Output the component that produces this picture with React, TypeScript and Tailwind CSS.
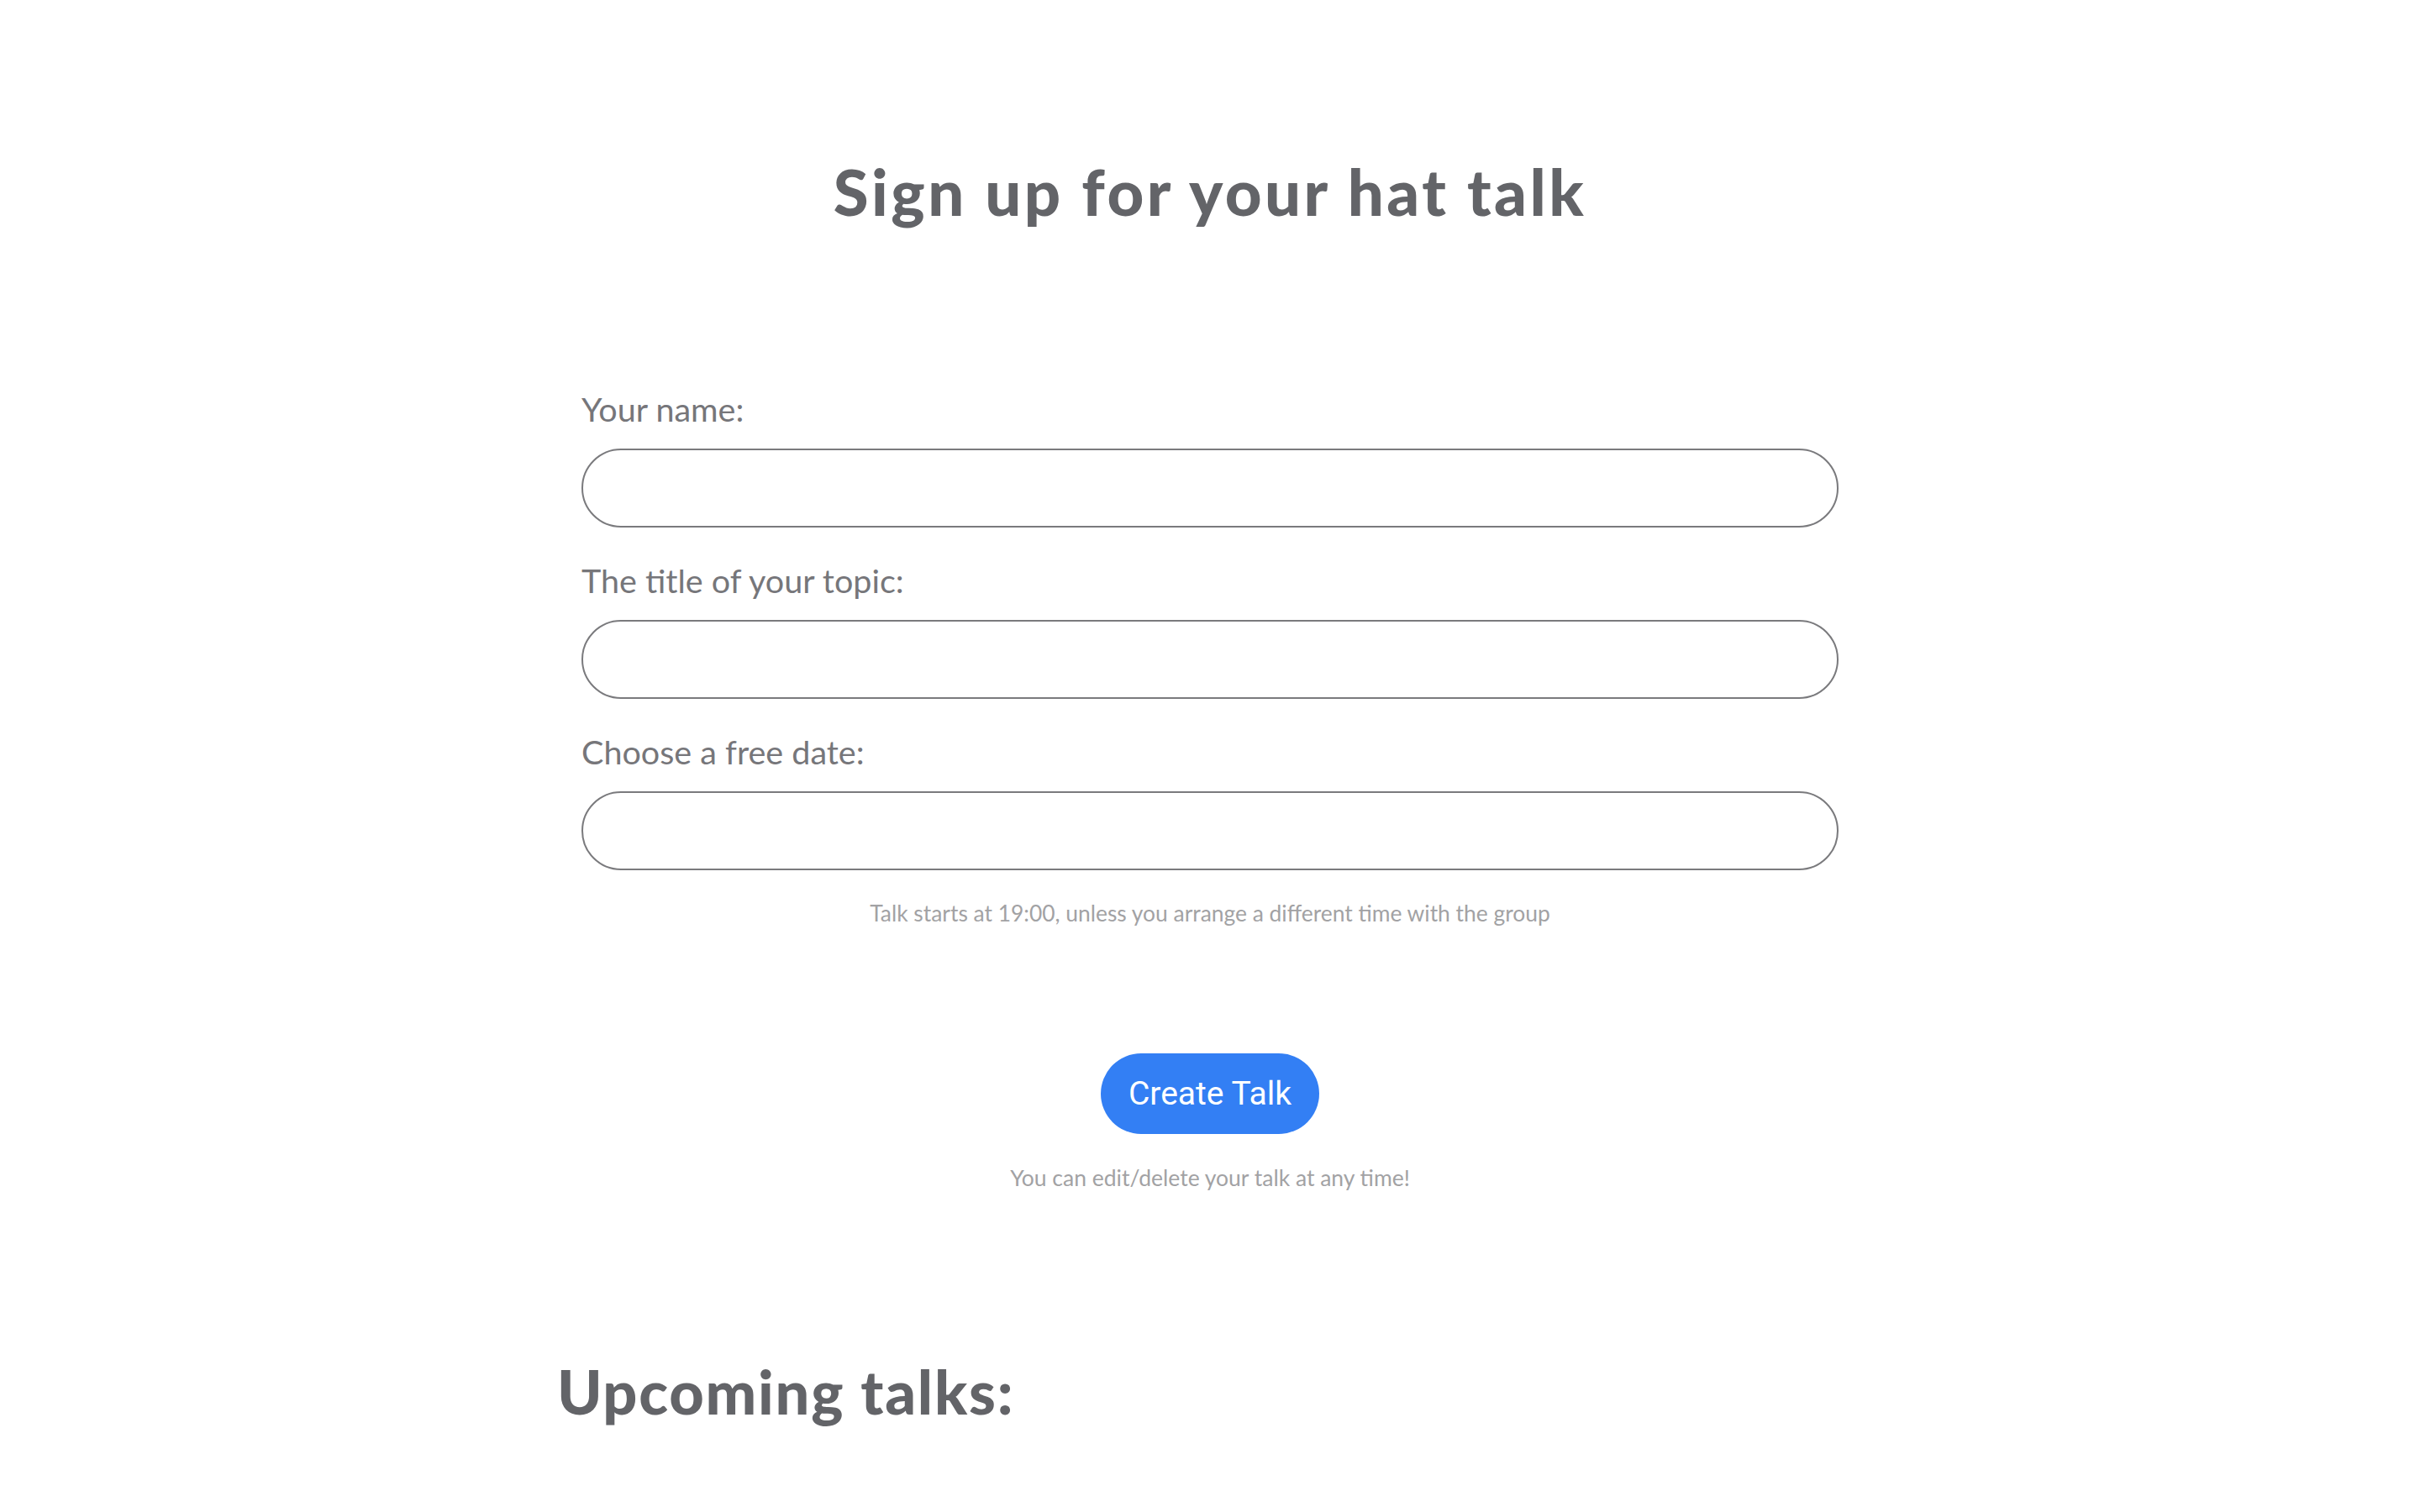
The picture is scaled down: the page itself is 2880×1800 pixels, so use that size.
export default function App() {
  const fields = ['Your name:', 'The title of your topic:', 'Choose a free date:'];

  return (
    <div className="min-h-screen bg-white font-['Lato','Liberation_Sans',sans-serif]">
      <div className="mx-auto w-[1554px] pt-[192px]">
        <h1 className="text-center text-[76px] leading-[72px] font-black tracking-[3.5px] text-[#636468]">
          Sign up for your hat talk
        </h1>

        <form className="mt-[203px] px-[29px]" onSubmit={(e) => e.preventDefault()}>
          {fields.map((label, i) => (
            <div key={label} className={i > 0 ? 'mt-[43px]' : ''}>
              <label className="block text-[39.5px] leading-[40px] text-[#76767a]">{label}</label>
              <input
                type="text"
                className="mt-[27px] block h-[94px] w-full rounded-full border-2 border-[#7a7a7d] bg-white px-10 text-[36px] outline-none"
              />
            </div>
          ))}

          <p className="mt-[38px] text-center text-[26.4px] leading-[27px] text-[#a2a2a4]">
            Talk starts at 19:00, unless you arrange a different time with the group
          </p>

          <div className="mt-[153px] flex justify-center">
            <button
              type="submit"
              className="h-[96px] w-[260px] rounded-[48px] bg-[#337ff4] font-['Roboto',sans-serif] text-[39px] text-white"
            >
              Create Talk
            </button>
          </div>

          <p className="mt-[39px] text-center text-[26.5px] leading-[27px] text-[#a2a2a4]">
            You can edit/delete your talk at any time!
          </p>
        </form>

        <h2 className="mt-[204px] text-[72px] leading-[72px] font-black tracking-[1.8px] text-[#636468]">
          Upcoming talks:
        </h2>
      </div>
    </div>
  );
}
